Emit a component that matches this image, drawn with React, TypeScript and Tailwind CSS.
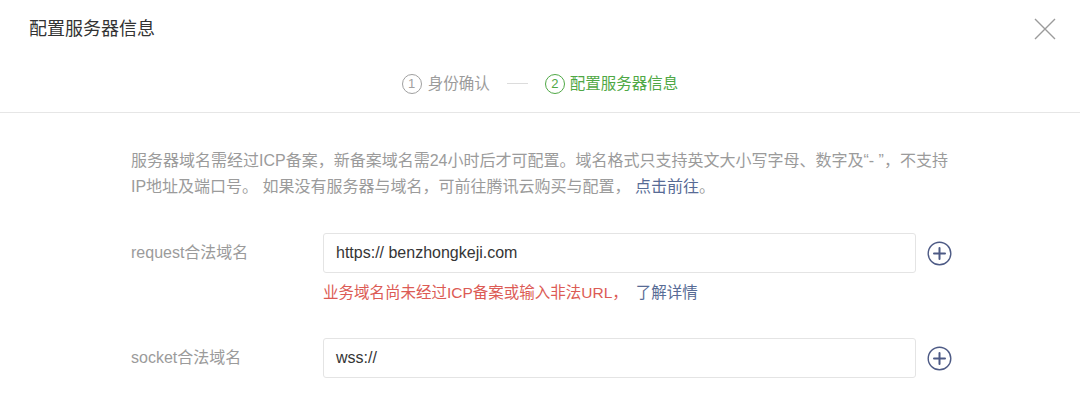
const PlusCircle = () => (
  <svg width="25" height="25" viewBox="0 0 25 25" fill="none">
    <circle cx="12.5" cy="12.5" r="11.3" stroke="#4d5a85" strokeWidth="1.4" />
    <path d="M12.5 7v11M7 12.5h11" stroke="#4d5a85" strokeWidth="2" strokeLinecap="round" />
  </svg>
)

const CloseIcon = () => (
  <svg width="22" height="22" viewBox="0 0 22 22" fill="none">
    <path d="M1 1l20 20M21 1L1 21" stroke="#9b9b9b" strokeWidth="1.4" />
  </svg>
)

const StepDot = ({ n, color }: { n: number; color: string }) => (
  <span
    className="w-[20px] h-[20px] rounded-full border-[1.4px] flex items-center justify-center text-[13px] leading-none"
    style={{ borderColor: color, color }}
  >
    {n}
  </span>
)

const DomainRow = ({ label, value }: { label: string; value: string }) => (
  <div className="flex items-center">
    <div className="w-[192px] text-[16px] text-[#9b9b9b]">{label}</div>
    <div className="w-[593px] h-[40px] border border-[#e4e4e4] rounded-[3px] px-[12px] flex items-center text-[16px] text-[#353535]">
      {value}
    </div>
    <div className="ml-[11px] flex items-center">
      <PlusCircle />
    </div>
  </div>
)

export default function App() {
  return (
    <div className="w-[1080px] h-[405px] bg-white overflow-hidden font-['Liberation_Sans','Noto_Sans_CJK_SC',sans-serif]">
      {/* header */}
      <div className="h-[58px] flex items-center justify-between pl-[29px] pr-[24px]">
        <h1 className="text-[18px] text-[#333]">配置服务器信息</h1>
        <CloseIcon />
      </div>

      {/* steps */}
      <div className="h-[55px] pb-[3px] flex items-center justify-center border-b border-[#e6e6e6] text-[15.5px]">
        <div className="flex items-center gap-[6px] text-[#9b9b9b]">
          <StepDot n={1} color="#a0a0a0" />
          <span>身份确认</span>
        </div>
        <div className="w-[21px] h-px bg-[#dcdcdc] mx-[17px]" />
        <div className="flex items-center gap-[5px] text-[#4fa845]">
          <StepDot n={2} color="#4fa845" />
          <span>配置服务器信息</span>
        </div>
      </div>

      {/* body */}
      <div className="pl-[131px] pt-[35px]">
        <p className="w-[840px] text-[16px] leading-[26px] text-[#9b9b9b]">
          服务器域名需经过ICP备案，新备案域名需24小时后才可配置。域名格式只支持英文大小写字母、数字及“- ”，不支持
          <br />
          IP地址及端口号。 如果没有服务器与域名，可前往腾讯云购买与配置，{" "}
          <span className="text-[#576b95]">点击前往</span>。
        </p>

        <div className="mt-[33px]">
          <DomainRow label="request合法域名" value="https:// benzhongkeji.com" />
          <div className="ml-[192px] mt-[10px] h-[20px] leading-[20px] text-[15.5px] text-[#dc5b55]">
            业务域名尚未经过ICP备案或输入非法URL，<span className="ml-[8px] text-[#576b95]">了解详情</span>
          </div>
        </div>

        <div className="mt-[35px]">
          <DomainRow label="socket合法域名" value="wss://" />
        </div>
      </div>
    </div>
  )
}
